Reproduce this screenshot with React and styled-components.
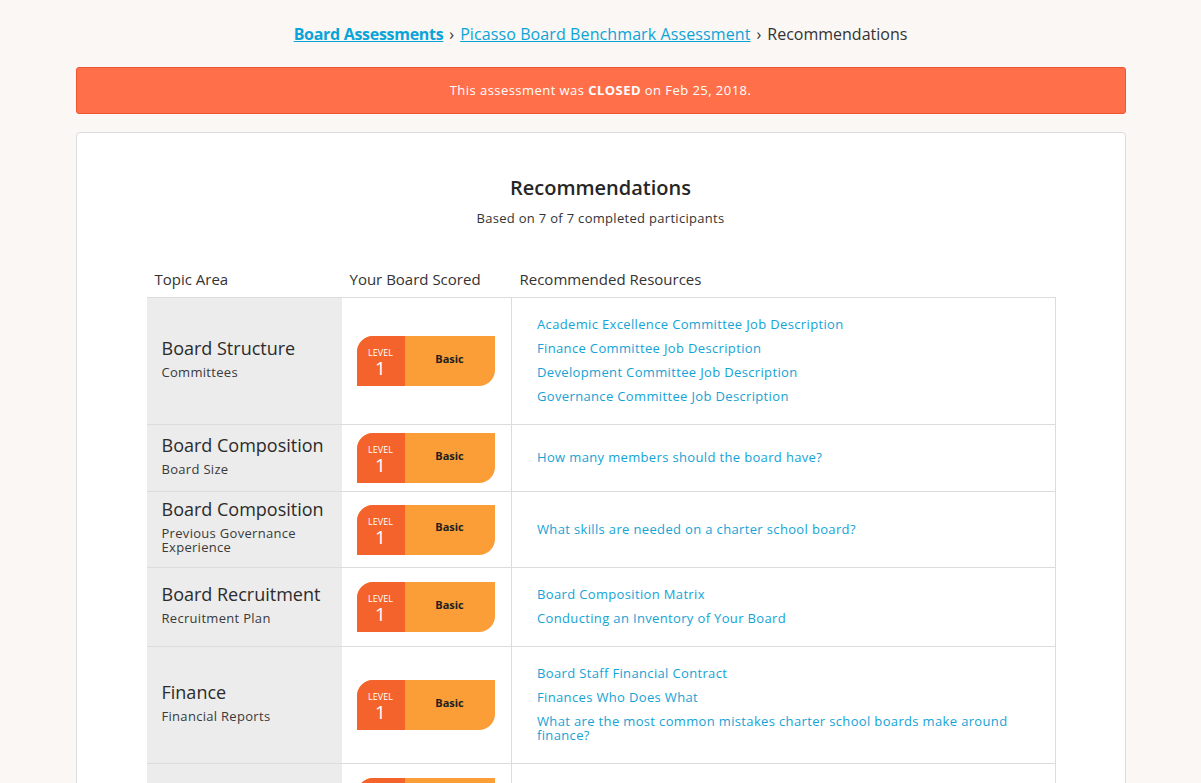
import React from "react";
import styled, { createGlobalStyle } from "styled-components";

const GlobalStyle = createGlobalStyle`
  html { scrollbar-width: none; }
  html::-webkit-scrollbar { display: none; }
  *, *::before, *::after { box-sizing: border-box; }
  body {
    margin: 0;
    background: #faf7f4;
    font-family: "Open Sans", "Liberation Sans", sans-serif;
    color: #333;
  }
`;

const Page = styled.div`
  width: 1050px;
  margin: 0 auto;
  padding-top: 24px;
`;

const Crumbs = styled.nav`
  text-align: center;
  font-size: 16px;
  line-height: 20px;
  color: #333;
`;

const CrumbLink = styled.a`
  color: #0ba4d8;
  text-decoration: underline;
  font-weight: ${(p) => (p.$strong ? 700 : 400)};
  letter-spacing: ${(p) => (p.$strong ? "-0.3px" : "0.1px")};
  cursor: pointer;
`;

const Sep = styled.span`
  margin: 0 6px;
`;

const Alert = styled.div`
  margin-top: 23px;
  background: #ff6f4a;
  border: 1px solid #ef5630;
  border-radius: 3px;
  color: #fff;
  text-align: center;
  font-size: 13px;
  line-height: 15px;
  letter-spacing: 0.45px;
  padding: 15px 0;

  strong {
    font-weight: 700;
  }
`;

const Card = styled.section`
  margin-top: 18px;
  background: #fff;
  border: 1px solid #dcdcdc;
  border-radius: 4px;
  padding: 43px 70px 40px 70px;
`;

const Title = styled.h2`
  margin: 0;
  text-align: center;
  font-size: 20px;
  line-height: 24px;
  font-weight: 600;
  color: #262626;
`;

const Subtitle = styled.p`
  margin: 10px 0 0;
  text-align: center;
  font-size: 13px;
  line-height: 16px;
  letter-spacing: 0.3px;
  color: #333;
`;

const Table = styled.table`
  margin-top: 36px;
  width: 909px;
  border-collapse: collapse;
  table-layout: fixed;
`;

const Th = styled.th`
  text-align: left;
  font-weight: 400;
  font-size: 15px;
  line-height: 18px;
  color: #333;
  padding: 8px 8px 9px;
  width: ${(p) => p.$w}px;
  border-bottom: 1px solid #dcdcdc;
`;

const Row = styled.tr`
  border-bottom: 1px solid #dcdcdc;
`;

const TopicCell = styled.td`
  background: #ececec;
  padding: 6px 15px;
  vertical-align: middle;
`;

const TopicName = styled.div`
  font-size: 18px;
  line-height: 22px;
  font-weight: 500;
  color: #2b2b2b;
`;

const TopicSub = styled.div`
  margin: 6px 0 7px;
  font-size: 13px;
  line-height: 14px;
  letter-spacing: 0.3px;
  color: #3a3a3a;
`;

const ScoreCell = styled.td`
  padding: 8px 15px;
  vertical-align: middle;
`;

const Badge = styled.div`
  display: flex;
  width: 138px;
  height: 50px;
  border-radius: 16px 0 16px 0;
  overflow: hidden;
  background: #fc9e38;
`;

const LevelBox = styled.div`
  width: 48px;
  background: #f4632b;
  color: #fff;
  display: flex;
  flex-direction: column;
  align-items: center;
  justify-content: center;
  padding-top: 5px;
`;

const LevelLabel = styled.span`
  font-size: 9px;
  line-height: 10px;
`;

const LevelNum = styled.span`
  font-size: 19px;
  line-height: 21px;
`;

const LevelName = styled.div`
  flex: 1;
  display: flex;
  align-items: center;
  justify-content: center;
  font-size: 11px;
  font-weight: 700;
  color: #1e1e1e;
  padding-bottom: 6px;
`;

const ResourceCell = styled.td`
  border-left: 1px solid #dcdcdc;
  border-right: 1px solid #dcdcdc;
  padding: 19px 25px 21px;
  vertical-align: middle;
`;

const ResourceLink = styled.a`
  display: block;
  color: #14a3d6;
  font-size: 13px;
  line-height: 14px;
  letter-spacing: 0.35px;
  text-decoration: none;
  cursor: pointer;

  & + & {
    margin-top: 10px;
  }
`;

const rows = [
  {
    topic: "Board Structure",
    sub: "Committees",
    links: [
      "Academic Excellence Committee Job Description",
      "Finance Committee Job Description",
      "Development Committee Job Description",
      "Governance Committee Job Description",
    ],
  },
  {
    topic: "Board Composition",
    sub: "Board Size",
    links: ["How many members should the board have?"],
  },
  {
    topic: "Board Composition",
    sub: "Previous Governance Experience",
    links: ["What skills are needed on a charter school board?"],
  },
  {
    topic: "Board Recruitment",
    sub: "Recruitment Plan",
    links: ["Board Composition Matrix", "Conducting an Inventory of Your Board"],
  },
  {
    topic: "Finance",
    sub: "Financial Reports",
    links: [
      "Board Staff Financial Contract",
      "Finances Who Does What",
      "What are the most common mistakes charter school boards make around finance?",
    ],
  },
  {
    topic: "Finance",
    sub: "Budget",
    links: ["Budget Approval Process", "Understanding the Annual Budget"],
  },
];

function LevelBadge({ level, name }) {
  return (
    <Badge>
      <LevelBox>
        <LevelLabel>LEVEL</LevelLabel>
        <LevelNum>{level}</LevelNum>
      </LevelBox>
      <LevelName>{name}</LevelName>
    </Badge>
  );
}

export default function App() {
  return (
    <>
      <GlobalStyle />
      <Page>
        <Crumbs>
          <CrumbLink $strong>Board Assessments</CrumbLink>
          <Sep>›</Sep>
          <CrumbLink>Picasso Board Benchmark Assessment</CrumbLink>
          <Sep>›</Sep>
          <span>Recommendations</span>
        </Crumbs>

        <Alert>
          This assessment was <strong>CLOSED</strong> on Feb 25, 2018.
        </Alert>

        <Card>
          <Title>Recommendations</Title>
          <Subtitle>Based on 7 of 7 completed participants</Subtitle>

          <Table>
            <thead>
              <tr>
                <Th $w={195}>Topic Area</Th>
                <Th $w={170}>Your Board Scored</Th>
                <Th $w={544}>Recommended Resources</Th>
              </tr>
            </thead>
            <tbody>
              {rows.map((row, i) => (
                <Row key={i}>
                  <TopicCell>
                    <TopicName>{row.topic}</TopicName>
                    <TopicSub>{row.sub}</TopicSub>
                  </TopicCell>
                  <ScoreCell>
                    <LevelBadge level={1} name="Basic" />
                  </ScoreCell>
                  <ResourceCell>
                    {row.links.map((l) => (
                      <ResourceLink key={l}>{l}</ResourceLink>
                    ))}
                  </ResourceCell>
                </Row>
              ))}
            </tbody>
          </Table>
        </Card>
      </Page>
    </>
  );
}
